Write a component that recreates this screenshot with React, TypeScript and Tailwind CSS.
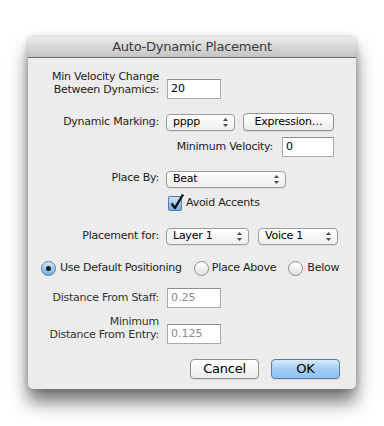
import React from 'react';

const font = "font-['DejaVu_Sans','Lucida_Grande',Verdana,sans-serif]";

const Label = ({ children, className = '' }: { children: React.ReactNode; className?: string }) => (
  <div className={`text-[11px] tracking-[-0.25px] text-[#1c1c1c] text-right ${className}`}>{children}</div>
);

const Field = ({ value, className = '', disabled = false }: { value: string; className?: string; disabled?: boolean }) => (
  <div
    className={`h-[20px] border border-[#a9a9a9] border-t-[#8e8e8e] bg-white pl-[3px] text-[11px] leading-[18px] ${
      disabled ? 'text-[#8a8a8a]' : 'text-black'
    } ${className}`}
  >
    {value}
  </div>
);

const Arrows = () => (
  <svg width="5" height="9" viewBox="0 0 5 9" className="shrink-0">
    <path d="M2.5 0 L5 3 H0 Z" fill="#4a4a4a" />
    <path d="M2.5 9 L5 6 H0 Z" fill="#4a4a4a" />
  </svg>
);

const Popup = ({ value, className = '' }: { value: string; className?: string }) => (
  <div
    className={`h-[17px] flex items-center justify-between rounded-[4px] border border-[#9c9c9c] bg-gradient-to-b from-white to-[#eeeeee] shadow-[0_1px_0_rgba(0,0,0,0.07)] pl-[6px] pr-[6px] text-[11px] tracking-[-0.25px] text-black ${className}`}
  >
    <span>{value}</span>
    <Arrows />
  </div>
);

const Button = ({ children, className = '', primary = false }: { children: React.ReactNode; className?: string; primary?: boolean }) => (
  <div
    className={`flex items-center justify-center rounded-[4px] border shadow-[0_1px_0_rgba(0,0,0,0.08)] text-black tracking-[-0.25px] ${
      primary
        ? 'border-[#5a79ad] bg-gradient-to-b from-[#d6e9fb] via-[#a6cdf3] to-[#8dc3f3]'
        : 'border-[#8f8f8f] bg-gradient-to-b from-white to-[#ececec]'
    } ${className}`}
  >
    {children}
  </div>
);

const Radio = ({ checked = false }: { checked?: boolean }) => (
  <div
    className={`w-[15px] h-[15px] rounded-full border flex items-center justify-center shrink-0 ${
      checked
        ? 'border-[#5a78a6] bg-gradient-to-b from-[#cfe4fa] to-[#74ade8]'
        : 'border-[#8e8e8e] bg-gradient-to-b from-white to-[#e2e2e2]'
    }`}
  >
    {checked && <div className="w-[5px] h-[5px] rounded-full bg-[#1a1a1a]" />}
  </div>
);

const Checkbox = () => (
  <div className="relative w-[14px] h-[15px] shrink-0 rounded-[2px] border border-[#5a78a6] bg-gradient-to-b from-[#cfe4fa] to-[#74ade8]">
    <svg width="16" height="18" viewBox="0 0 16 18" className="absolute left-[0px] top-[-4px]">
      <path d="M2.5 10.5 L6 15 L14 1.5" stroke="#111" strokeWidth="2.4" fill="none" strokeLinejoin="round" />
    </svg>
  </div>
);

export default function App() {
  return (
    <div className={`w-[384px] h-[426px] bg-white pt-[37px] pl-[28px] ${font}`}>
      <div className="w-[328px] h-[352px] rounded-[5px] bg-[#ececec] flex flex-col shadow-[0_13px_18px_rgba(0,0,0,0.55),0_0_6px_rgba(0,0,0,0.22)]">
        {/* Title bar */}
        <div className="h-[21px] shrink-0 rounded-t-[5px] border-b border-[#6c6c6c] bg-gradient-to-b from-[#ebebeb] to-[#c4c4c4] flex items-center justify-center text-[13px] tracking-[-0.25px] text-[#3a3a3a]">
          Auto-Dynamic Placement
        </div>

        {/* Content */}
        <div className="flex flex-col">
          <div className="mt-[12px] flex items-start">
            <Label className="w-[131px] leading-[13px]">
              Min Velocity Change
              <br />
              Between Dynamics:
            </Label>
            <Field value="20" className="ml-[8px] mt-[9px] w-[54px]" />
          </div>

          <div className="mt-[14px] h-[18px] flex items-center">
            <Label className="w-[131px]">Dynamic Marking:</Label>
            <Popup value="pppp" className="ml-[7px] w-[69px]" />
            <Button className="ml-[8px] w-[91px] h-[18px] text-[11px]">Expression…</Button>
          </div>

          <div className="mt-[6px] h-[20px] flex items-center justify-end pr-[22px]">
            <Label>Minimum Velocity:</Label>
            <Field value="0" className="ml-[9px] w-[52px]" />
          </div>

          <div className="mt-[14px] h-[17px] flex items-center">
            <Label className="w-[131px] mb-[3px]">Place By:</Label>
            <Popup value="Beat" className="ml-[7px] w-[120px]" />
          </div>

          <div className="mt-[8px] h-[15px] flex items-center pl-[140px]">
            <Checkbox />
            <span className="ml-[4px] text-[11px] tracking-[-0.25px] text-[#1c1c1c]">Avoid Accents</span>
          </div>

          <div className="mt-[17px] h-[17px] flex items-center">
            <Label className="w-[131px]">Placement for:</Label>
            <Popup value="Layer 1" className="ml-[7px] w-[83px]" />
            <Popup value="Voice 1" className="ml-[9px] w-[80px]" />
          </div>

          <div className="mt-[16px] h-[15px] flex items-center pl-[13px] text-[11px] tracking-[-0.25px] text-[#1c1c1c]">
            <Radio checked />
            <span className="ml-[4px]">Use Default Positioning</span>
            <div className="ml-[12px]">
              <Radio />
            </div>
            <span className="ml-[3px]">Place Above</span>
            <div className="ml-[12px]">
              <Radio />
            </div>
            <span className="ml-[4px]">Below</span>
          </div>

          <div className="mt-[12px] h-[20px] flex items-center">
            <Label className="w-[131px] text-[#333]">Distance From Staff:</Label>
            <Field value="0.25" disabled className="ml-[8px] w-[54px]" />
          </div>

          <div className="mt-[7px] flex items-start">
            <Label className="w-[131px] leading-[13px] text-[#333]">
              Minimum
              <br />
              Distance From Entry:
            </Label>
            <Field value="0.125" disabled className="ml-[8px] mt-[9px] w-[54px]" />
          </div>

          <div className="mt-[15px] flex justify-end gap-[12px] pr-[16px]">
            <Button className="w-[69px] h-[20px] text-[13px]">Cancel</Button>
            <Button primary className="w-[69px] h-[20px] text-[13px]">
              OK
            </Button>
          </div>
        </div>
      </div>
    </div>
  );
}
